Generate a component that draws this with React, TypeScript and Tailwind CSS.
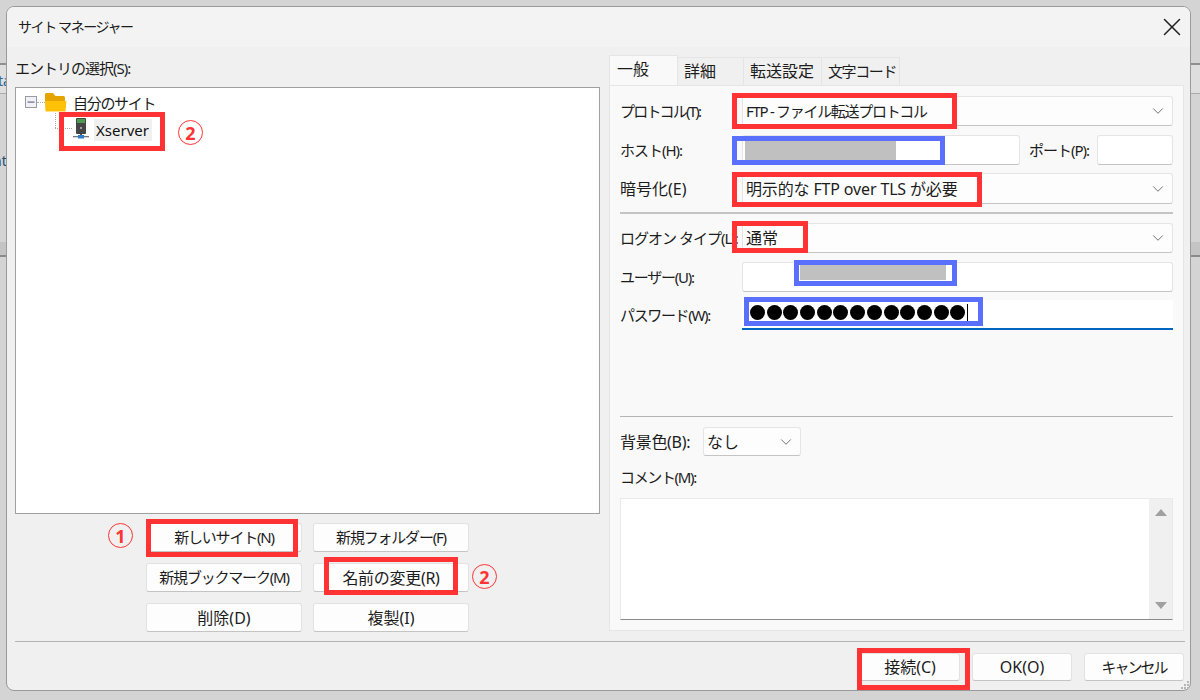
import { ChevronDown, X } from "lucide-react";

const font = "font-['Noto_Sans','Noto_Sans_CJK_JP',sans-serif]";
const inputBorder = "border border-[#e5e5e5] border-b-[#c4c4c4] rounded-[3px]";

function Mark({ className }: { className: string }) {
  return <div className={`absolute border-[5px] border-[#ff3333] ${className}`}></div>;
}

function BlueMark({ className }: { className: string }) {
  return <div className={`absolute border-[5px] border-[#5b6fff] ${className}`}></div>;
}

function Circled({ children, className }: { children: string; className: string }) {
  return (
    <div
      className={`absolute w-[25px] h-[25px] rounded-full border border-[#ff3333] text-[#ff3333] flex items-center justify-center text-[18px] font-bold leading-none ${className}`}
    >
      {children}
    </div>
  );
}

function Btn({ children, className }: { children: string; className: string }) {
  return (
    <div
      className={`flex items-center justify-center bg-[#fdfdfd] border border-[#e2e2e2] border-b-[#c4c4c4] rounded-[3px] text-[#1c1c1c] whitespace-nowrap ${className}`}
    >
      {children}
    </div>
  );
}

function Select({ children, className }: { children?: string; className: string }) {
  return (
    <div className={`flex items-center pl-[3px] pr-[5px] bg-[#fdfdfd] ${inputBorder} text-[#1c1c1c] ${className}`}>
      <span className="flex-1 whitespace-nowrap">{children}</span>
      <ChevronDown size={18} strokeWidth={1.1} className="text-[#555]" />
    </div>
  );
}

function Label({ children, className }: { children: string; className: string }) {
  return <div className={`w-[122px] shrink-0 whitespace-nowrap text-[#1c1c1c] ${className}`}>{children}</div>;
}

function TreeIcons() {
  return (
    <>
      <svg width="12" height="12" viewBox="0 0 12 12" className="absolute left-[9px] top-[8px]">
        <rect x="0.5" y="0.5" width="11" height="11" fill="#f2f2f6" stroke="#9a9aa6" />
        <rect x="2.5" y="5.5" width="7" height="1.2" fill="#6a6a8a" />
      </svg>
      <div className="absolute left-[21px] top-[14px] w-[8px] border-t border-dotted border-[#aaa]"></div>
      <div className="absolute left-[39px] top-[25px] h-[15px] border-l border-dotted border-[#aaa]"></div>
      <div className="absolute left-[39px] top-[40px] w-[17px] border-t border-dotted border-[#aaa]"></div>
      <svg width="22" height="19" viewBox="0 0 22 19" className="absolute left-[29px] top-[5px]">
        <path d="M0 1.5A1.5 1.5 0 0 1 1.5 0h6.5l2.5 3h8a1.5 1.5 0 0 1 1.5 1.5V8H0z" fill="#e5a400" />
        <path d="M0 8h21.5l-.9 9.5a1 1 0 0 1-1 1H1.4a1 1 0 0 1-1-1z" fill="#ffc107" />
      </svg>
      <svg width="16" height="21" viewBox="0 0 16 21" className="absolute left-[57px] top-[30px]">
        <rect x="3" y="0" width="10" height="16" rx="1" fill="#454545" />
        <rect x="4" y="1" width="8" height="4" fill="#4c9a50" />
        <rect x="7" y="9" width="2" height="2" fill="#a0a0a0" />
        <rect x="7" y="16" width="2" height="2" fill="#555" />
        <rect x="0" y="18" width="16" height="1.3" fill="#777" />
        <rect x="5" y="17" width="6" height="3.5" fill="#2f7fd0" />
      </svg>
    </>
  );
}

function ResizeGrip() {
  return (
    <svg width="10" height="10" viewBox="0 0 10 10" className="absolute right-0 bottom-0">
      <rect x="7" y="1" width="2" height="2" fill="#b5b5b5" />
      <rect x="4" y="4" width="2" height="2" fill="#b5b5b5" />
      <rect x="7" y="4" width="2" height="2" fill="#b5b5b5" />
      <rect x="1" y="7" width="2" height="2" fill="#b5b5b5" />
      <rect x="4" y="7" width="2" height="2" fill="#b5b5b5" />
      <rect x="7" y="7" width="2" height="2" fill="#b5b5b5" />
    </svg>
  );
}

export default function App() {
  return (
    <div className={`relative w-[1200px] h-[700px] overflow-hidden bg-[#d4d4d4] ${font}`}>
      {/* app behind the dialog */}
      <div className="absolute inset-x-0 top-[63px] h-[31px] bg-[#dedede] border-t-2 border-b border-t-[#8f8f8f] border-b-[#aaaaaa]"></div>
      <div className="absolute inset-x-0 top-[242px] h-[15px] bg-[#c4c4c4] border-b-2 border-[#8a8a8a]"></div>
      <div className="absolute left-[-2px] top-[70px] text-[14px] text-[#2b5f8a]">ta</div>
      <div className="absolute left-[-7px] top-[150px] text-[14px] text-[#2b4a6a]">nt</div>

      <div className="relative ml-[6px] mt-[6px] w-[1185px] h-[685px] flex flex-col rounded-[8px] border border-[#9a9a9a] bg-[#f0f0f0] overflow-hidden">
        {/* title bar */}
        <div className="h-[40px] shrink-0 bg-[#f3f3f3] flex items-center justify-between pl-[11px] pr-[3px]">
          <span className="text-[14px] tracking-[-1.4px] -mt-[2px] text-[#1c1c1c] whitespace-nowrap">サイト マネージャー</span>
          <X size={30} strokeWidth={1.2} className="text-[#222] -mt-[1px]" />
        </div>

        <div className="flex-1 flex pl-[8px] gap-[9px]">
          {/* left column */}
          <div className="w-[585px] shrink-0 flex flex-col">
            <div className="h-[40px] pt-[10px] text-[15px] tracking-[-1px] leading-[22px] text-[#1c1c1c] whitespace-nowrap">エントリの選択(S):</div>
            <div className="relative h-[427px] bg-white border border-[#a0a0a0]">
              <TreeIcons />
              <div className="absolute left-[57px] top-[4px] text-[15px] tracking-[-1.3px] leading-[22px] text-[#1c1c1c] whitespace-nowrap">自分のサイト</div>
              <div className="absolute left-[78px] top-[31px] w-[58px] h-[22px] pl-[2px] bg-[#f0f0f0] text-[15px] leading-[22px] text-[#111]">Xserver</div>
            </div>
            <div className="mt-[9px] ml-[131px] grid grid-cols-[156px_156px] gap-x-[11px] gap-y-[11px]">
              <Btn className="h-[29px] text-[15px] tracking-[-1.2px]">新しいサイト(N)</Btn>
              <Btn className="h-[29px] text-[15px] tracking-[-1.2px]">新規フォルダー(F)</Btn>
              <Btn className="h-[29px] text-[15px] tracking-[-1.2px]">新規ブックマーク(M)</Btn>
              <Btn className="h-[29px] text-[16px] tracking-[-0.3px]">名前の変更(R)</Btn>
              <Btn className="h-[29px] text-[16px]">削除(D)</Btn>
              <Btn className="h-[29px] text-[16px]">複製(I)</Btn>
            </div>
          </div>

          {/* right column */}
          <div className="w-[575px] shrink-0 flex flex-col pt-[8px]">
            <div className="flex h-[30px] items-end text-[16px] text-[#1c1c1c]">
              <div className="w-[69px] h-[30px] bg-[#f9f9f9] border border-b-0 border-[#e5e5e5] pl-[7px] leading-[26px]">一般</div>
              <div className="w-[66px] h-[28px] bg-[#f0f0f0] border-t border-r border-[#e5e5e5] pl-[6px] leading-[26px]">詳細</div>
              <div className="w-[78px] h-[28px] bg-[#f0f0f0] border-t border-r border-[#e5e5e5] pl-[6px] leading-[26px] whitespace-nowrap">転送設定</div>
              <div className="w-[78px] h-[28px] bg-[#f0f0f0] border-t border-r border-[#e5e5e5] pl-[6px] text-[15px] tracking-[-1.4px] leading-[26px] whitespace-nowrap">文字コード</div>
            </div>
            <div className="h-[546px] bg-[#f9f9f9] border border-[#e5e5e5] pl-[10px] pr-[10px] flex flex-col">
              <div className="flex items-center mt-[10px]">
                <Label className="text-[15px] tracking-[-1.8px]">プロトコル(T):</Label>
                <Select className="h-[30px] flex-1 text-[15px] tracking-[-1.3px]">FTP - ファイル転送プロトコル</Select>
              </div>
              <div className="flex items-center mt-[9px]">
                <Label className="text-[15px] tracking-[-1px]">ホスト(H):</Label>
                <div className={`w-[278px] h-[30px] bg-white ${inputBorder}`}></div>
                <div className="w-[77px] pl-[9px] text-[15px] tracking-[-1px] whitespace-nowrap text-[#1c1c1c]">ポート(P):</div>
                <div className={`flex-1 h-[30px] bg-white ${inputBorder}`}></div>
              </div>
              <div className="flex items-center mt-[8px]">
                <Label className="text-[16px]">暗号化(E)</Label>
                <Select className="h-[31px] flex-1 text-[16px] tracking-[-0.15px]">明示的な FTP over TLS が必要</Select>
              </div>
              <div className="mt-[8px] border-t-2 border-[#c4c4c4]"></div>
              <div className="flex items-center mt-[9px]">
                <Label className="text-[15px] tracking-[-1px]">ログオン タイプ(L):</Label>
                <Select className="h-[30px] flex-1 text-[16px]">通常</Select>
              </div>
              <div className="flex items-center mt-[9px]">
                <Label className="text-[15px] tracking-[-1.25px]">ユーザー(U):</Label>
                <div className={`flex-1 h-[30px] bg-white ${inputBorder}`}></div>
              </div>
              <div className="flex items-center mt-[8px]">
                <Label className="text-[15px] tracking-[-1.35px]">パスワード(W):</Label>
                <div className="flex-1 h-[30px] bg-white border-b-2 border-[#0067c0]"></div>
              </div>
              <div className="mt-[86px] border-t border-[#b4b4b4]"></div>
              <div className="flex items-center mt-[10px]">
                <div className="w-[83px] text-[16px] tracking-[-0.3px] whitespace-nowrap text-[#1c1c1c]">背景色(B):</div>
                <Select className="w-[98px] h-[29px] text-[16px]">なし</Select>
              </div>
              <div className="mt-[10px] h-[22px] text-[15px] tracking-[-1.35px] leading-[22px] text-[#1c1c1c]">コメント(M):</div>
              <div className="mt-[10px] h-[122px] bg-white border border-[#eaeaea] border-b-[#8a8a8a] flex justify-end">
                <div className="w-[23px] h-full bg-[#f0f0f0] flex flex-col items-center justify-between py-[10px]">
                  <div className="w-0 h-0 border-x-[6px] border-x-transparent border-b-[7px] border-b-[#a0a0a0]"></div>
                  <div className="w-0 h-0 border-x-[6px] border-x-transparent border-t-[7px] border-t-[#a0a0a0]"></div>
                </div>
              </div>
            </div>
          </div>
        </div>

        {/* footer */}
        <div className="relative h-[49px] shrink-0">
          <div className="ml-[8px] mr-[5px] h-full border-t border-[#b4b4b4] flex justify-end items-start pt-[11px] gap-[12px] pr-[1px]">
            <Btn className="w-[100px] h-[28px] text-[16px]">接続(C)</Btn>
            <Btn className="w-[100px] h-[28px] text-[16px]">OK(O)</Btn>
            <Btn className="w-[100px] h-[28px] text-[15px] tracking-[-2px]">キャンセル</Btn>
          </div>
          <ResizeGrip />
        </div>
      </div>

      {/* masked values */}
      <div className="absolute left-[745px] top-[141px] w-[151px] h-[20px] bg-[#c0c0c0]"></div>
      <div className="absolute left-[800px] top-[265px] w-[146px] h-[15px] bg-[#c0c0c0]"></div>
      <div className="absolute left-[750px] top-[305px] flex gap-[1.7px]">
        {Array.from({ length: 13 }).map((_, i) => (
          <div key={i} className="w-[15px] h-[15px] rounded-full bg-black"></div>
        ))}
        <div className="w-[1px] h-[18px] -mt-[1px] bg-black"></div>
      </div>

      {/* annotations */}
      <Mark className="left-[59px] top-[112px] w-[106px] h-[39px]" />
      <Mark className="left-[732px] top-[93px] w-[225px] h-[36px]" />
      <Mark className="left-[732px] top-[172px] w-[250px] h-[35px]" />
      <Mark className="left-[732px] top-[221px] w-[76px] h-[32px]" />
      <Mark className="left-[146px] top-[519px] w-[152px] h-[38px]" />
      <Mark className="left-[324px] top-[557px] w-[134px] h-[38px]" />
      <Mark className="left-[857px] top-[648px] w-[113px] h-[42px]" />
      <BlueMark className="left-[732px] top-[136px] w-[213px] h-[29px]" />
      <BlueMark className="left-[794px] top-[260px] w-[163px] h-[26px]" />
      <BlueMark className="left-[744px] top-[297px] w-[239px] h-[29px]" />
      <Circled className="left-[178px] top-[120px]">2</Circled>
      <Circled className="left-[108px] top-[523px]">1</Circled>
      <Circled className="left-[472px] top-[564px]">2</Circled>
    </div>
  );
}
